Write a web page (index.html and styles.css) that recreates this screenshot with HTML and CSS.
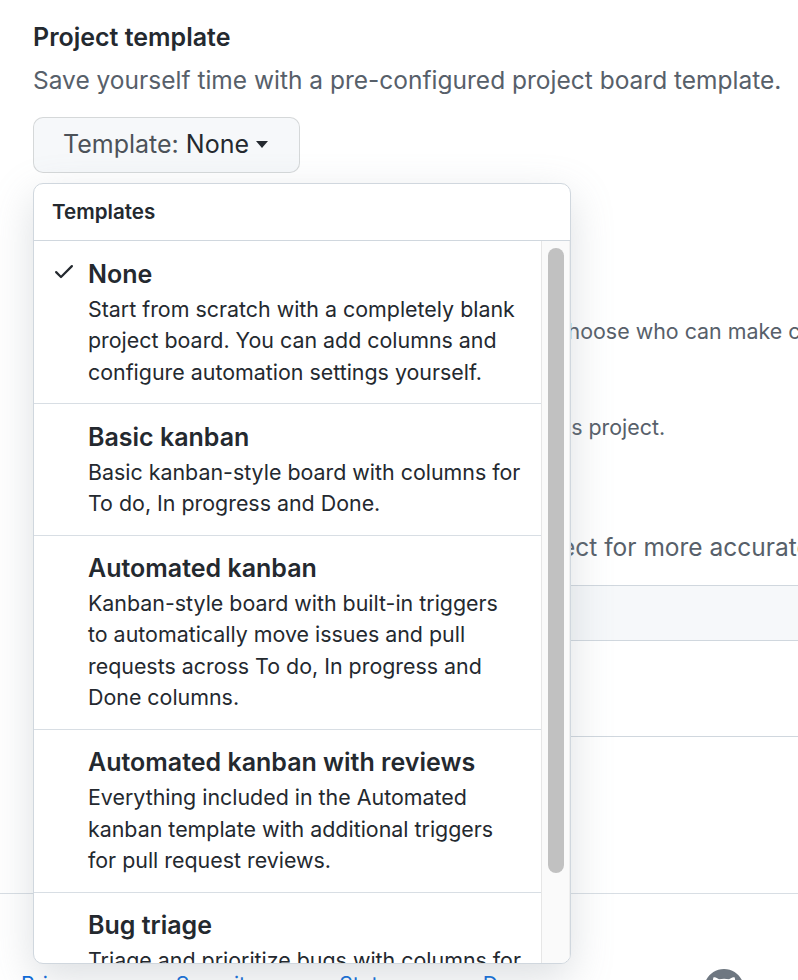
FILE: index.html
```html
<!DOCTYPE html>
<html lang="en">
<head>
<meta charset="utf-8">
<title>Create project</title>
<link rel="stylesheet" href="styles.css">
</head>
<body>
<div class="page">
  <main class="form">
    <section class="group">
      <h2 class="label">Project template</h2>
      <p class="note-lg">Save yourself time with a pre-configured project board template.</p>
      <div class="picker">
        <button class="btn" type="button">Template: <span class="btn-value">None</span><span class="caret"></span></button>
        <div class="menu">
          <div class="menu-header">Templates</div>
          <div class="menu-body">
            <div class="menu-list">
              <div class="item">
                <svg class="item-icon" viewBox="0 0 16 16" width="24" height="24"><path d="M13.78 4.22a.75.75 0 010 1.06l-7.25 7.25a.75.75 0 01-1.06 0L2.22 9.28a.75.75 0 011.06-1.06L6 10.940l6.72-6.72a.75.75 0 011.06 0z"/></svg>
                <div class="item-body">
                  <div class="item-title">None</div>
                  <div class="item-desc">Start from scratch with a completely blank<br>project board. You can add columns and<br>configure automation settings yourself.</div>
                </div>
              </div>
              <div class="item">
                <span class="item-icon"></span>
                <div class="item-body">
                  <div class="item-title">Basic kanban</div>
                  <div class="item-desc">Basic kanban-style board with columns for<br>To do, In progress and Done.</div>
                </div>
              </div>
              <div class="item">
                <span class="item-icon"></span>
                <div class="item-body">
                  <div class="item-title">Automated kanban</div>
                  <div class="item-desc">Kanban-style board with built-in triggers<br>to automatically move issues and pull<br>requests across To do, In progress and<br>Done columns.</div>
                </div>
              </div>
              <div class="item">
                <span class="item-icon"></span>
                <div class="item-body">
                  <div class="item-title">Automated kanban with reviews</div>
                  <div class="item-desc">Everything included in the Automated<br>kanban template with additional triggers<br>for pull request reviews.</div>
                </div>
              </div>
              <div class="item">
                <span class="item-icon"></span>
                <div class="item-body">
                  <div class="item-title">Bug triage</div>
                  <div class="item-desc">Triage and prioritize bugs with columns for<br>To do, High priority, Low priority, and<br>Closed.</div>
                </div>
              </div>
            </div>
            <div class="scrollbar"><div class="scrollbar-thumb"></div></div>
          </div>
        </div>
      </div>
    </section>

    <section class="group visibility">
      <h2 class="label">Visibility</h2>
      <div class="radio-row"><span class="radio checked"></span><span class="radio-label">Public</span></div>
      <p class="note note-public">Anyone on the internet can see this project. You choose who can make changes.</p>
      <div class="radio-row"><span class="radio"></span><span class="radio-label">Private</span></div>
      <p class="note note-private">You choose who can see and make changes to this project.</p>
    </section>

    <section class="group linked">
      <h2 class="label">Linked repositories</h2>
      <p class="note-lg note-linked">Search to link repositories to this project for more accurate suggestions and better search results.</p>
      <div class="repo-box">
        <div class="repo-box-header"><span class="search-hint">Search by repository name</span></div>
        <div class="repo-box-body"><span class="empty-hint">No repositories linked yet</span></div>
      </div>
    </section>

    <button class="btn btn-primary" type="button">Create project</button>
  </main>

  <footer class="footer">
    <nav class="footer-links">
      <a href="#">Privacy</a>
      <a href="#">Security</a>
      <a href="#">Status</a>
      <a href="#">Docs</a>
    </nav>
    <svg class="footer-logo" viewBox="0 0 16 16" width="40" height="40"><path d="M8 0C3.58 0 0 3.58 0 8c0 3.540 2.29 6.53 5.47 7.59.4.07.55-.17.55-.38 0-.19-.01-.82-.01-1.49-2.01.37-2.530-.49-2.690-.94-.09-.23-.48-.94-.82-1.13-.28-.15-.68-.52-.01-.53.63-.01 1.08.58 1.23.82.72 1.21 1.87.87 2.33.66.07-.52.28-.87.51-1.07-1.78-.2-3.64-.89-3.64-3.95 0-.87.31-1.59.82-2.15-.08-.2-.36-1.02.08-2.12 0 0 .67-.21 2.2.82.64-.18 1.32-.27 2-.27.68 0 1.36.09 2 .27 1.53-1.04 2.2-.82 2.2-.82.44 1.1.16 1.92.08 2.12.51.56.82 1.27.82 2.15 0 3.07-1.87 3.75-3.65 3.95.29.25.54.73.54 1.48 0 1.07-.01 1.93-.01 2.2 0 .21.15.46.55.38A8.013 8.013 0 0016 8c0-4.42-3.58-8-8-8z"/></svg>
  </footer>
</div>
</body>
</html>
```

FILE: styles.css
```css
* {
  box-sizing: border-box;
}

html,
body {
  margin: 0;
  padding: 0;
  background: #ffffff;
}

body {
  font-family: Inter, "Noto Sans", "Liberation Sans", sans-serif;
  color: #24292f;
}

.page {
  width: 798px;
  height: 980px;
  overflow: hidden;
  position: relative;
}

.form {
  padding: 19px 0 0 33px;
}

.group {
  margin: 0;
}

.label {
  margin: 0;
  font-size: 25px;
  line-height: 36.75px;
  font-weight: 600;
  color: #24292f;
}

.note-lg {
  margin: 6px 0 0;
  font-size: 24.5px;
  line-height: 36.75px;
  color: #57606a;
  white-space: nowrap;
}

.picker {
  position: relative;
  margin-top: 18px;
}

.btn {
  display: inline-flex;
  align-items: center;
  height: 56px;
  padding: 0 31px 0 29px;
  border: 1px solid rgba(27, 31, 36, 0.15);
  border-radius: 10px;
  background: #f6f8fa;
  font-family: inherit;
  font-size: 25px;
  line-height: 1;
  color: #4c5259;
  white-space: pre;
}

.btn-value {
  color: #24292f;
}

.caret {
  width: 0;
  height: 0;
  margin-left: 7px;
  border-top: 7px solid #24292f;
  border-left: 6.5px solid transparent;
  border-right: 6.5px solid transparent;
}

/* dropdown menu */
.menu {
  position: absolute;
  top: 66px;
  left: 0;
  z-index: 5;
  width: 538px;
  height: 781px;
  display: flex;
  flex-direction: column;
  background: #ffffff;
  border: 1px solid #d0d7de;
  border-radius: 10px;
  box-shadow: 0 14px 42px rgba(140, 149, 159, 0.3);
  overflow: hidden;
}

.menu-header {
  flex: none;
  height: 57px;
  padding-left: 18px;
  display: flex;
  align-items: center;
  border-bottom: 1px solid #d0d7de;
  font-size: 20.6px;
  font-weight: 600;
  color: #24292f;
}

.menu-body {
  flex: 1;
  min-height: 0;
  display: flex;
}

.menu-list {
  flex: 1;
  min-width: 0;
  padding-top: 1px;
  overflow: hidden;
}

.scrollbar {
  flex: none;
  width: 29px;
  padding: 7px 5px 0 6px;
  background: #fafafa;
  border-left: 1px solid #e6e6e6;
  border-right: 1px solid #efefef;
}

.scrollbar-thumb {
  height: 625px;
  background: #c1c1c1;
  border-radius: 8px;
}

.item {
  display: flex;
  padding: 14.5px 0 15px 17.7px;
}

.item + .item {
  border-top: 1px solid #d8dee4;
}

.item-icon {
  flex: none;
  width: 24px;
  height: 24px;
  margin-top: 3.3px;
  margin-right: 12.3px;
  fill: #24292f;
}

.item-title {
  font-size: 25px;
  line-height: 36.75px;
  font-weight: 600;
  color: #24292f;
}

.item-desc {
  margin-top: 1px;
  font-size: 21.4px;
  line-height: 31.5px;
  color: #24292f;
  white-space: nowrap;
}

/* background form content */
.visibility {
  margin-top: 41.5px;
}

.radio-row {
  display: flex;
  align-items: center;
  height: 36.75px;
  margin-top: 24px;
  font-size: 24.5px;
  font-weight: 600;
}

.radio {
  width: 22px;
  height: 22px;
  margin-right: 12px;
  border: 1px solid #8c959f;
  border-radius: 50%;
}

.radio.checked {
  border: 7px solid #0969da;
}

.note {
  margin: 4px 0 0;
  font-size: 21.4px;
  line-height: 31.5px;
  color: #57606a;
  white-space: nowrap;
}

.note-public {
  padding-left: 32px;
}

.note-private {
  padding-left: 32px;
}

.linked {
  margin-top: 42.75px;
}

.note-linked {
  padding-left: 98px;
}

.repo-box {
  width: 900px;
  margin-top: 19.25px;
  border: 1px solid #d0d7de;
  border-right: 0;
  border-radius: 10px 0 0 10px;
}

.repo-box-header {
  height: 55px;
  padding-left: 28px;
  display: flex;
  align-items: center;
  background: #f6f8fa;
  border-bottom: 1px solid #d0d7de;
  border-radius: 10px 0 0 0;
  font-size: 21px;
  color: #6e7781;
}

.repo-box-body {
  height: 95px;
  padding-left: 28px;
  display: flex;
  align-items: center;
  font-size: 21px;
  color: #57606a;
}

.btn-primary {
  margin-top: 35px;
  background: #2da44e;
  color: #ffffff;
  border-color: rgba(27, 31, 36, 0.15);
  font-weight: 600;
}

/* footer */
.footer {
  position: absolute;
  left: 0;
  right: 0;
  top: 893px;
  display: flex;
  align-items: flex-start;
  padding: 75px 0 0 21px;
  border-top: 1px solid #d8dee4;
}

.footer-links {
  display: flex;
  gap: 81px;
}

.footer-links a {
  font-size: 21px;
  line-height: 31.5px;
  color: #0969da;
  text-decoration: none;
}

.footer-logo {
  margin-left: 170px;
  margin-top: 0;
  fill: #6e7781;
}
```
